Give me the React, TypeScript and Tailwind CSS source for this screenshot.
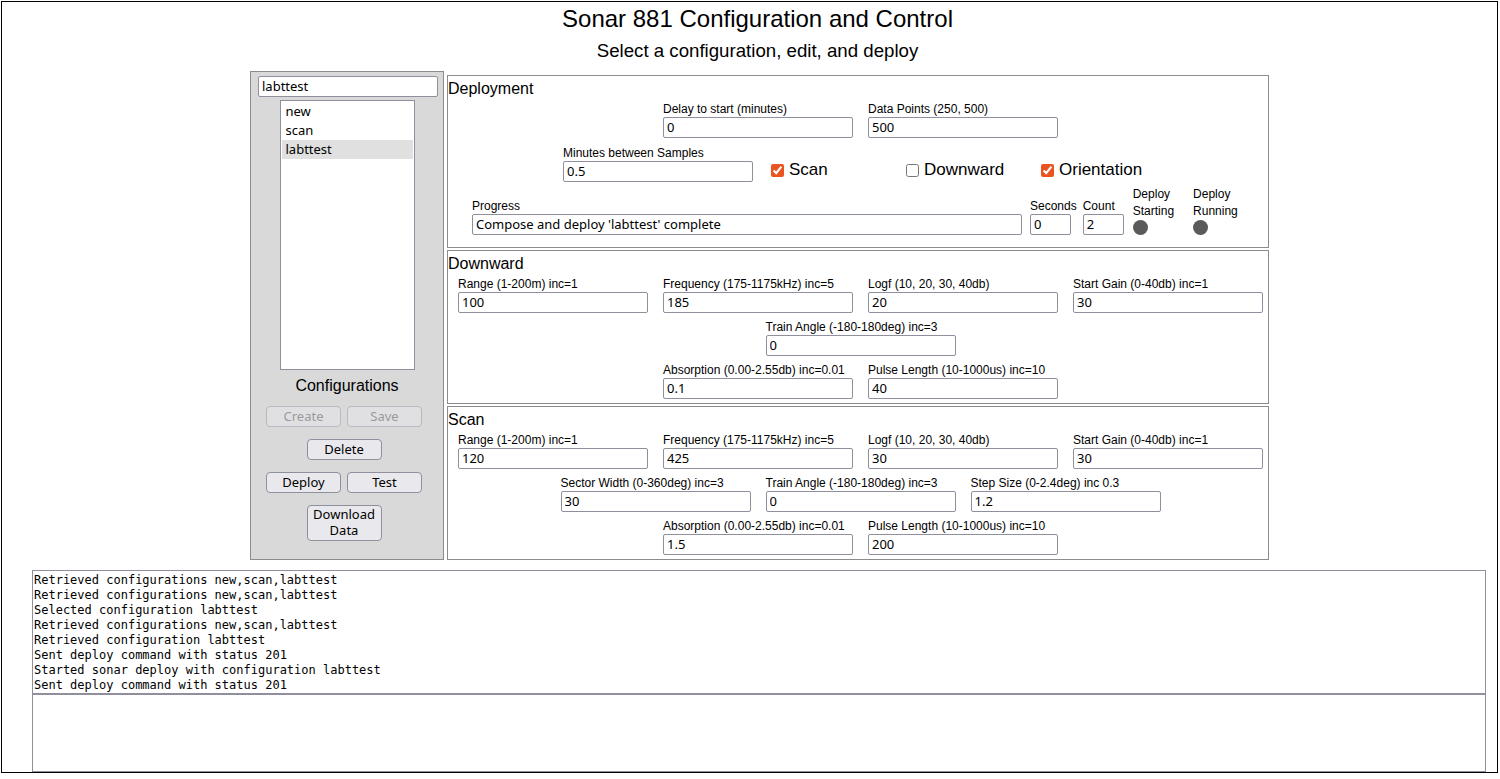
import React from "react";

const inputCls =
  "h-[21px] border border-[#8f8f9d] rounded-[2px] bg-white px-[3px] pt-0 pb-[2px] text-[13px] leading-[17px] text-black font-['Noto_Sans',sans-serif] outline-none";

const btnCls =
  "w-[75px] h-[21px] border border-[#8f8f9d] rounded-[4px] bg-[#e9e9ed] pb-[2px] text-[13px] leading-[16px] text-black font-['Noto_Sans',sans-serif]";

const btnOff =
  "w-[75px] h-[21px] border border-[#b9b9c0] rounded-[4px] bg-[#e0e0e2] pb-[2px] text-[13px] leading-[16px] text-[#9a9a9a] font-['Noto_Sans',sans-serif]";

type FieldProps = { label: string; value: string; width?: string };

const Field = ({ label, value, width = "w-[190px]" }: FieldProps) => (
  <div className="flex flex-col">
    <label className="text-[12px] leading-[16px] whitespace-nowrap">{label}</label>
    <input className={`${inputCls} ${width}`} defaultValue={value} />
  </div>
);

const Check = ({ label, checked }: { label: string; checked: boolean }) => (
  <label className="flex items-center w-[120px] h-[21px] pb-[3px]">
    <input
      type="checkbox"
      defaultChecked={checked}
      className="m-0 ml-[3px] w-[13px] h-[13px] accent-[#e95420]"
    />
    <span className="ml-[5px] text-[17px] leading-[20px]">{label}</span>
  </label>
);

const Indicator = ({ top, bottom }: { top: string; bottom: string }) => (
  <div className="flex flex-col text-[12px] leading-[17px]">
    <span>{top}</span>
    <span>{bottom}</span>
    <div className="w-[15px] h-[15px] rounded-full bg-[#5a5a5a]"></div>
  </div>
);

const configs = ["new", "scan", "labttest"];

const log = [
  "Retrieved configurations new,scan,labttest",
  "Retrieved configurations new,scan,labttest",
  "Selected configuration labttest",
  "Retrieved configurations new,scan,labttest",
  "Retrieved configuration labttest",
  "Sent deploy command with status 201",
  "Started sonar deploy with configuration labttest",
  "Sent deploy command with status 201",
];

export default function App() {
  return (
    <div className="ml-[1px] mt-[1px] w-[1497px] h-[772px] border border-black bg-white text-black font-['Liberation_Sans',Arial,sans-serif]">
      {/* header */}
      <div className="pt-[3px] pl-[16px] text-center">
        <h1 className="text-[24px] leading-[28px]">Sonar 881 Configuration and Control</h1>
        <p className="mt-[7px] text-[18.67px] leading-[21px]">Select a configuration, edit, and deploy</p>
      </div>

      <div className="flex items-start ml-[248px] mt-[10px]">
        {/* configurations panel */}
        <div className="w-[194px] h-[489px] border border-[#8c8c8c] bg-[#d9d9d9] pt-[4px] flex flex-col">
          <input className={`${inputCls} ml-[7px] w-[180px] px-[2px]`} defaultValue="labttest" />
          <div className="mt-[3px] mx-auto w-[135px] h-[270px] border border-[#8f8f9d] bg-white p-[1px] font-['Noto_Sans',sans-serif] text-[13px]">
            {configs.map((c) => (
              <div
                key={c}
                className={`h-[19px] leading-[19px] pl-[4px] ${c === "labttest" ? "bg-[#e0e0e0]" : ""}`}
              >
                {c}
              </div>
            ))}
          </div>
          <div className="mt-[7px] text-center text-[16px] leading-[18px]">Configurations</div>
          <div className="mt-[11px] flex justify-center gap-[6px] pr-[6px]">
            <button className={btnOff} disabled>Create</button>
            <button className={btnOff} disabled>Save</button>
          </div>
          <div className="mt-[12px] flex justify-center pr-[6px]">
            <button className={btnCls}>Delete</button>
          </div>
          <div className="mt-[12px] flex justify-center gap-[6px] pr-[6px]">
            <button className={btnCls}>Deploy</button>
            <button className={btnCls}>Test</button>
          </div>
          <div className="mt-[12px] flex justify-center pr-[6px]">
            <button className={`${btnCls} h-[36px]`}>
              Download
              <br />
              Data
            </button>
          </div>
        </div>

        {/* settings column */}
        <div className="ml-[3px] mt-[4px] w-[822px] flex flex-col">
          {/* deployment */}
          <section className="h-[173px] border border-[#8c8c8c] pt-[4px]">
            <h2 className="text-[16px] leading-[18px]">Deployment</h2>
            <div className="mt-[3px] pl-[5px] flex justify-center gap-[15px]">
              <Field label="Delay to start (minutes)" value="0" />
              <Field label="Data Points (250, 500)" value="500" />
            </div>
            <div className="mt-[7px] pl-[5px] flex justify-center items-end gap-[15px]">
              <Field label="Minutes between Samples" value="0.5" />
              <Check label="Scan" checked />
              <Check label="Downward" checked={false} />
              <Check label="Orientation" checked />
            </div>
            <div className="mt-[4px] pl-[24px] flex items-end">
              <Field label="Progress" value="Compose and deploy 'labttest' complete" width="w-[550px]" />
              <div className="ml-[8px]">
                <Field label="Seconds" value="0" width="w-[41px]" />
              </div>
              <div className="ml-[6px]">
                <Field label="Count" value="2" width="w-[41px]" />
              </div>
              <div className="ml-[9px]">
                <Indicator top="Deploy" bottom="Starting" />
              </div>
              <div className="ml-[19px]">
                <Indicator top="Deploy" bottom="Running" />
              </div>
            </div>
          </section>

          {/* downward */}
          <section className="mt-[2px] h-[154px] border border-[#8c8c8c] pt-[4px]">
            <h2 className="text-[16px] leading-[18px]">Downward</h2>
            <div className="mt-[3px] pl-[5px] flex justify-center gap-[15px]">
              <Field label="Range (1-200m) inc=1" value="100" />
              <Field label="Frequency (175-1175kHz) inc=5" value="185" />
              <Field label="Logf (10, 20, 30, 40db)" value="20" />
              <Field label="Start Gain (0-40db) inc=1" value="30" />
            </div>
            <div className="mt-[6px] pl-[5px] flex justify-center gap-[15px]">
              <Field label="Train Angle (-180-180deg) inc=3" value="0" />
            </div>
            <div className="mt-[6px] pl-[5px] flex justify-center gap-[15px]">
              <Field label="Absorption (0.00-2.55db) inc=0.01" value="0.1" />
              <Field label="Pulse Length (10-1000us) inc=10" value="40" />
            </div>
          </section>

          {/* scan */}
          <section className="mt-[2px] h-[154px] border border-[#8c8c8c] pt-[4px]">
            <h2 className="text-[16px] leading-[18px]">Scan</h2>
            <div className="mt-[3px] pl-[5px] flex justify-center gap-[15px]">
              <Field label="Range (1-200m) inc=1" value="120" />
              <Field label="Frequency (175-1175kHz) inc=5" value="425" />
              <Field label="Logf (10, 20, 30, 40db)" value="30" />
              <Field label="Start Gain (0-40db) inc=1" value="30" />
            </div>
            <div className="mt-[6px] pl-[5px] flex justify-center gap-[15px]">
              <Field label="Sector Width (0-360deg) inc=3" value="30" />
              <Field label="Train Angle (-180-180deg) inc=3" value="0" />
              <Field label="Step Size (0-2.4deg) inc 0.3" value="1.2" />
            </div>
            <div className="mt-[6px] pl-[5px] flex justify-center gap-[15px]">
              <Field label="Absorption (0.00-2.55db) inc=0.01" value="1.5" />
              <Field label="Pulse Length (10-1000us) inc=10" value="200" />
            </div>
          </section>
        </div>
      </div>

      {/* log */}
      <div className="mt-[10px] ml-[30px] w-[1454px] h-[124px] border border-[#8f8f9d] px-[1px] pt-[2px] font-['DejaVu_Sans_Mono',monospace] text-[12px] leading-[15px] whitespace-pre">
        {log.map((l, i) => (
          <div key={i}>{l}</div>
        ))}
      </div>
      <div className="ml-[30px] w-[1454px] h-[78px] border border-[#8f8f9d]"></div>
    </div>
  );
}
